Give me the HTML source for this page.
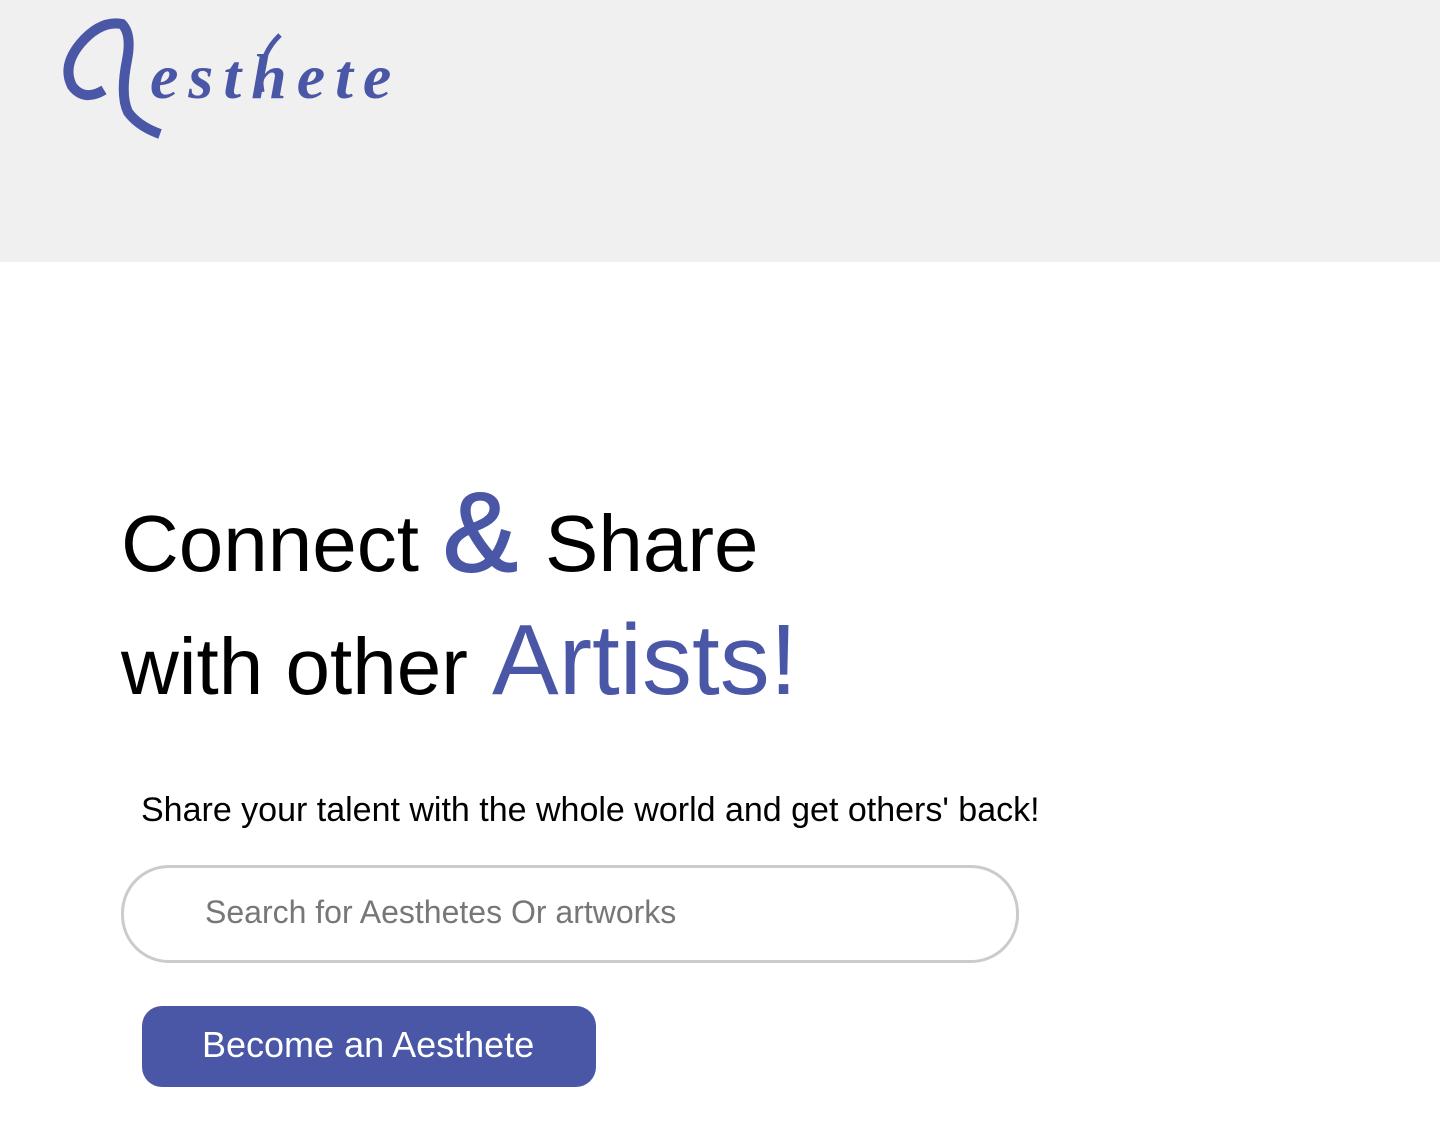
<!DOCTYPE html>
<html><head><meta charset="utf-8"><style>
html,body{margin:0;padding:0;background:#fff;width:1440px;height:1136px;overflow:hidden;position:relative;font-family:"Liberation Sans",Arial,sans-serif}
.hdr{position:absolute;left:0;top:0;width:1440px;height:262px;background:#f0f0f0}
.t{position:absolute;line-height:1;white-space:nowrap;color:#000}
.b{color:#4a57a6}
.search{position:absolute;left:121px;top:865px;width:892px;height:92px;border:3px solid #cbcbcb;border-radius:48px;box-sizing:content-box}
.btn{position:absolute;left:142px;top:1006px;width:454px;height:81px;background:#4a57a6;border-radius:20px}
</style></head><body>
<div class="hdr">
<svg width="420" height="150" style="position:absolute;left:0;top:0">
<path d="M104,90 Q84,102 72,86 Q62,66 80,44 Q100,20 122,24 Q132,34 127,60 Q120,95 128,112 Q138,126 160,134" fill="none" stroke="#4a57a6" stroke-width="10" stroke-linecap="butt"/>
<path d="M262,92 Q256,58 280,35" fill="none" stroke="#4a57a6" stroke-width="5"/>
<text x="150" y="98" font-family="Liberation Serif" font-style="italic" font-weight="bold" font-size="64" fill="#4a57a6" letter-spacing="10">esthete</text>
</svg>
</div>
<div class="t" style="left:121px;top:504px;font-size:80px">Connect</div>
<div class="t b" style="left:443px;top:477px;font-size:112px;-webkit-text-stroke:2px #4a57a6">&amp;</div>
<div class="t" style="left:545px;top:504px;font-size:80px">Share</div>
<div class="t" style="left:121px;top:627px;font-size:80px">with other</div>
<div class="t b" style="left:492px;top:610px;font-size:100px">Artists!</div>
<div class="t" style="left:141px;top:793px;font-size:34px">Share your talent with the whole world and get others' back!</div>
<div class="search"></div>
<div class="t" style="left:205px;top:896px;font-size:32px;color:#777">Search for Aesthetes Or artworks</div>
<div class="btn"></div>
<div class="t" style="left:202px;top:1027px;font-size:36px;color:#fff">Become an Aesthete</div>
</body></html>
